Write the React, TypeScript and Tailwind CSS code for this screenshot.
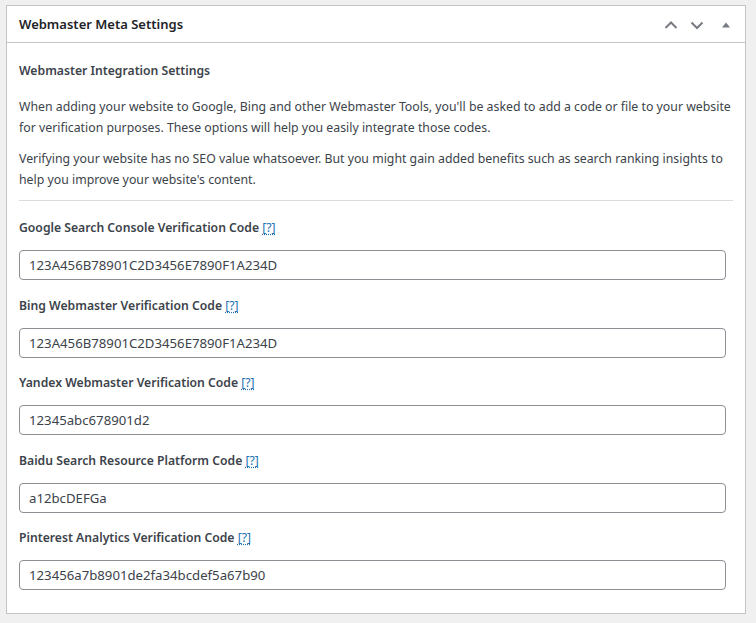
import React from "react";

const fields = [
  { label: "Google Search Console Verification Code", value: "123A456B78901C2D3456E7890F1A234D" },
  { label: "Bing Webmaster Verification Code", value: "123A456B78901C2D3456E7890F1A234D" },
  { label: "Yandex Webmaster Verification Code", value: "12345abc678901d2" },
  { label: "Baidu Search Resource Platform Code", value: "a12bcDEFGa" },
  { label: "Pinterest Analytics Verification Code", value: "123456a7b8901de2fa34bcdef5a67b90" },
];

const App: React.FC = () => {
  return (
    <div className="min-h-screen bg-[#f0f0f1] pt-[5px] pl-[6px] font-['Noto_Sans',sans-serif]">
      <div className="w-[740px] h-[609px] bg-white border border-[#c3c4c7]">
        {/* Header */}
        <div className="h-[37px] pt-[2px] flex items-center justify-between border-b border-[#c3c4c7] pl-[12px] pr-[12px]">
          <h2 className="text-[13px] font-semibold text-[#1d2327]">Webmaster Meta Settings</h2>
          <div className="flex items-center text-[#787c82]">
            <svg width="16" height="16" viewBox="0 0 16 16" className="mr-[10px]">
              <path d="M2.5 11 L8 5.5 L13.5 11" fill="none" stroke="currentColor" strokeWidth="2" />
            </svg>
            <svg width="16" height="16" viewBox="0 0 16 16" className="mr-[16px]">
              <path d="M2.5 5.5 L8 11 L13.5 5.5" fill="none" stroke="currentColor" strokeWidth="2" />
            </svg>
            <svg width="10" height="10" viewBox="0 0 10 10" className="mr-[2px]">
              <path d="M1 7.5 L5 2.5 L9 7.5 Z" fill="currentColor" />
            </svg>
          </div>
        </div>

        {/* Body */}
        <div className="px-[12px] pt-[18px] text-[12.2px] text-[#3c434a]">
          <h3 className="font-semibold leading-[20px]">Webmaster Integration Settings</h3>
          <p className="mt-[15px] leading-[21px] whitespace-nowrap text-[12.3px]">
            When adding your website to Google, Bing and other Webmaster Tools, you'll be asked to add a code or file to your website
            <br />
            for verification purposes. These options will help you easily integrate those codes.
          </p>
          <p className="mt-[10px] leading-[21px] whitespace-nowrap text-[12.3px]">
            Verifying your website has no SEO value whatsoever. But you might gain added benefits such as search ranking insights to
            <br />
            help you improve your website's content.
          </p>
          <hr className="mt-[10px] border-0 border-t border-[#dcdcde]" />

          <div className="pt-[17px]">
            {fields.map((f, i) => (
              <div key={i} className="mb-[15.5px]">
                <label className="block font-semibold leading-[20px]">
                  {f.label}{" "}
                  <a href="#" className="font-normal text-[#2271b1] underline decoration-dotted underline-offset-2">
                    [?]
                  </a>
                </label>
                <input
                  type="text"
                  defaultValue={f.value}
                  className="mt-[12px] block w-[707px] h-[30px] px-[9px] border border-[#8c8f94] rounded-[4px] text-[13.2px] text-[#3c434a] outline-none"
                />
              </div>
            ))}
          </div>
        </div>
      </div>
    </div>
  );
};

export default App;
